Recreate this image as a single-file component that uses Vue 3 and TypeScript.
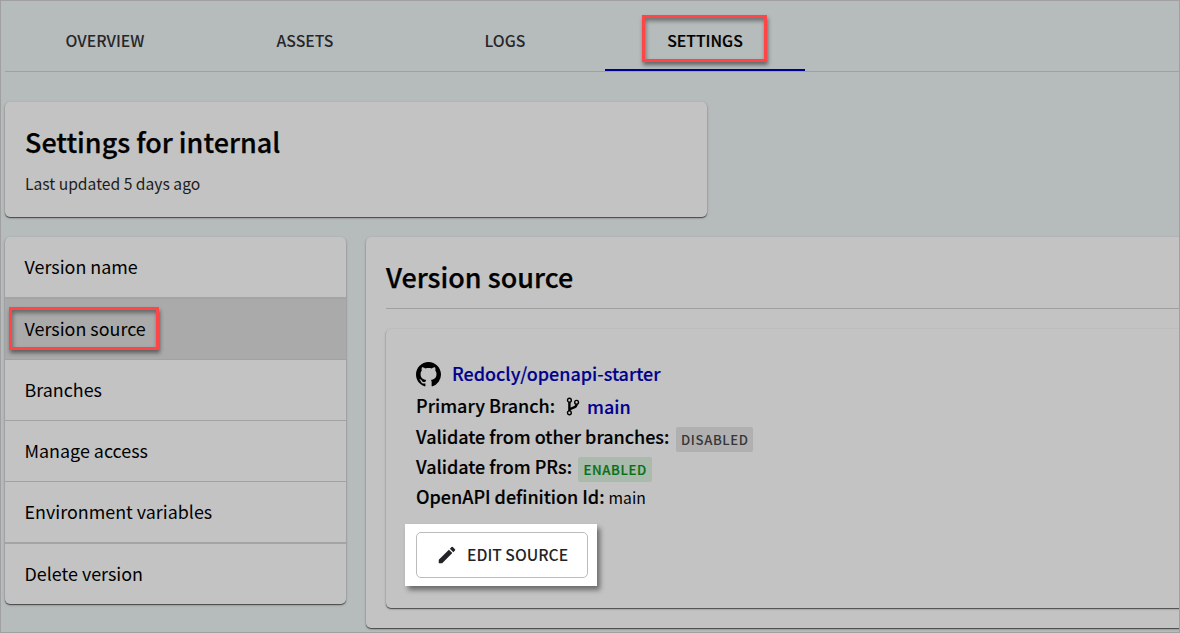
<script setup lang="ts">
import { ref } from 'vue'

interface MenuItem {
  label: string
  divider: string
}

const tabs: string[] = ['OVERVIEW', 'ASSETS', 'LOGS', 'SETTINGS']
const activeTab = ref('SETTINGS')
const items: MenuItem[] = [
  { label: 'Version name', divider: 'thick' },
  { label: 'Version source', divider: 'thin' },
  { label: 'Branches', divider: 'thin' },
  { label: 'Manage access', divider: 'thin' },
  { label: 'Environment variables', divider: 'thick' },
  { label: 'Delete version', divider: 'none' },
]
const activeItem = ref('Version source')
</script>

<template>
  <div class="page">
    <nav class="tabs">
      <div
        v-for="tab in tabs"
        :key="tab"
        class="tab"
        :class="{ active: tab === activeTab }"
        @click="activeTab = tab"
      >
        <span>{{ tab }}</span>
        <i v-if="tab === 'SETTINGS'" class="marker tab-marker"></i>
      </div>
    </nav>

    <header class="card intro">
      <h1>Settings for internal</h1>
      <p>Last updated 5 days ago</p>
    </header>

    <div class="columns">
      <aside class="card menu">
        <div
          v-for="item in items"
          :key="item.label"
          class="item"
          :class="[item.divider, { selected: item.label === activeItem }]"
          @click="activeItem = item.label"
        >
          <span>{{ item.label }}</span>
          <i v-if="item.label === 'Version source'" class="marker item-marker"></i>
        </div>
      </aside>

      <main class="card panel">
        <h2>Version source</h2>
        <section class="card source">
          <div class="row repo">
            <svg class="github" viewBox="0 0 16 16" width="25" height="25">
              <path d="M8 0C3.58 0 0 3.58 0 8c0 3.54 2.29 6.53 5.47 7.59.4.07.55-.17.55-.38 0-.19-.01-.82-.01-1.49-2.01.37-2.53-.49-2.69-.94-.09-.23-.48-.94-.82-1.13-.28-.15-.68-.52-.01-.53.63-.01 1.08.58 1.23.82.72 1.21 1.87.87 2.33.66.07-.52.28-.87.51-1.07-1.78-.2-3.64-.89-3.64-3.95 0-.87.31-1.59.82-2.15-.08-.2-.36-1.02.08-2.12 0 0 .67-.21 2.2.82.64-.18 1.32-.27 2-.27s1.36.09 2 .27c1.53-1.04 2.2-.82 2.2-.82.44 1.1.16 1.92.08 2.12.51.56.82 1.27.82 2.15 0 3.07-1.87 3.75-3.65 3.95.29.25.54.73.54 1.48 0 1.07-.01 1.93-.01 2.2 0 .21.15.46.55.38A8.01 8.01 0 0 0 16 8c0-4.42-3.58-8-8-8z" />
            </svg>
            <a class="link">Redocly/openapi-starter</a>
          </div>
          <div class="row branch">
            <b>Primary Branch:</b>
            <svg class="fork" viewBox="0 0 14 19" width="14" height="19">
              <g fill="none" stroke="#000">
                <circle cx="3.4" cy="3.2" r="1.9" stroke-width="1.4" />
                <circle cx="3.4" cy="15.8" r="1.9" stroke-width="1.4" />
                <circle cx="10.6" cy="5.3" r="1.9" stroke-width="1.4" />
                <path d="M3.4 5v9M10.6 7.2c0 4.8-6.6 2.7-7 6.2" stroke-width="2.4" />
              </g>
            </svg>
            <a class="link branch-link">main</a>
          </div>
          <div class="row">
            <b>Validate from other branches:</b>
            <span class="badge off">DISABLED</span>
          </div>
          <div class="row">
            <b>Validate from PRs:</b>
            <span class="badge on">ENABLED</span>
          </div>
          <div class="row">
            <b>OpenAPI definition Id:</b>
            <span class="value">main</span>
          </div>
          <div class="spotlight">
            <button>
              <svg viewBox="0 0 24 24" width="22" height="22">
                <path d="M3 17.25V21h3.75L17.81 9.94l-3.75-3.75L3 17.25zM20.71 7.04a1 1 0 0 0 0-1.41l-2.34-2.34a1 1 0 0 0-1.41 0l-1.83 1.83 3.75 3.75 1.83-1.83z" />
              </svg>
              <span>EDIT SOURCE</span>
            </button>
          </div>
        </section>
      </main>
    </div>
  </div>
</template>

<style>
body {
  margin: 0;
  overflow: hidden;
}
</style>

<style scoped>
.page {
  box-sizing: border-box;
  width: 1180px;
  height: 633px;
  overflow: hidden;
  padding-left: 4px;
  border: 1px solid #a0a0a1;
  background: #b6bbbc;
  color: #000;
  font-family: 'Noto Sans CJK JP', 'Noto Sans CJK SC', 'Open Sans', sans-serif;
}
.tabs {
  display: flex;
  height: 70px;
  border-bottom: 1px solid #9da0ac;
}
.tab {
  position: relative;
  box-sizing: border-box;
  width: 200px;
  height: 70px;
  padding-top: 6px;
  line-height: 68px;
  text-align: center;
  font-size: 15.8px;
  font-weight: 500;
  color: #252729;
}
.tab.active {
  color: #000;
  border-bottom: 2px solid #00008f;
  -webkit-text-stroke: 0.2px #000;
}
.marker {
  position: absolute;
  box-sizing: border-box;
  border: 3px solid #ff4545;
  box-shadow: 1px 3px 4px rgba(0, 0, 0, 0.45), inset 1px 3px 4px rgba(0, 0, 0, 0.4);
}
.tab-marker {
  left: 37px;
  top: 14px;
  width: 125px;
  height: 47px;
}
.card {
  box-sizing: border-box;
  border-radius: 5px;
  background: #c3c3c3;
  box-shadow: 0 1px 1px rgba(0, 0, 0, 0.55), 0 1px 3px rgba(0, 0, 0, 0.2);
}
.intro {
  width: 702px;
  height: 115px;
  margin-top: 30px;
  padding: 20px 20px 0;
}
h1,
h2 {
  margin: 0;
  font-size: 26.95px;
  line-height: 40px;
  font-weight: 500;
  -webkit-text-stroke: 0.25px #000;
}
p {
  margin: 9px 0 0;
  font-size: 15.65px;
  line-height: 26px;
  color: #1c1c1c;
}
.columns {
  display: flex;
  align-items: flex-start;
  gap: 20px;
  margin-top: 20px;
}
.menu {
  width: 341px;
  flex: none;
}
.item {
  position: relative;
  height: 60px;
  padding-left: 19.5px;
  line-height: 58px;
  font-size: 17.9px;
}
.item.thin {
  border-bottom: 1px solid #a2a2a2;
}
.item.thick {
  border-bottom: 2px solid #a4a4a4;
}
.item.selected {
  background: #aaa;
}
.item-marker {
  left: 4px;
  top: 8px;
  width: 150px;
  height: 43px;
}
.panel {
  width: 840px;
  height: 391px;
  flex: none;
  padding: 20px 0 0 20px;
}
h2 {
  height: 51px;
  border-bottom: 1px solid #a0a0a0;
}
.source {
  width: 840px;
  height: 279px;
  margin-top: 20px;
  padding: 29px 0 0 30px;
}
.row {
  display: flex;
  align-items: center;
  height: 30px;
  font-size: 17.97px;
  line-height: 30px;
}
.repo,
.branch {
  height: 32px;
}
b {
  padding-bottom: 2px;
  font-weight: 500;
  -webkit-text-stroke: 0.15px #000;
}
.link {
  padding-bottom: 2px;
  color: #00008f;
  font-weight: 500;
  -webkit-text-stroke: 0.15px #00008f;
}
.github {
  margin-right: 11px;
}
.fork {
  margin: 0 7px 0 11px;
}
.branch .branch-link {
  padding-bottom: 0;
}
.badge {
  box-sizing: border-box;
  height: 25px;
  margin: 4px 0 0 7px;
  border-radius: 2px;
  text-align: center;
  line-height: 25px;
  font-size: 13.2px;
  font-weight: 500;
  letter-spacing: 0.6px;
}
.off {
  width: 77px;
  background: #b0b0b0;
  color: #353637;
}
.on {
  width: 74px;
  margin-left: 6px;
  background: #aabbad;
  color: #067018;
  -webkit-text-stroke: 0.2px #067018;
}
.value {
  margin-left: 4px;
  padding-top: 2px;
  font-size: 15.7px;
}
.spotlight {
  box-sizing: border-box;
  width: 192px;
  height: 62px;
  margin: 12px 0 0 -11px;
  padding: 8px 9px 8px 11px;
  background: #fff;
  box-shadow: 3px 4px 5px rgba(0, 0, 0, 0.45);
}
button {
  display: flex;
  align-items: center;
  width: 172px;
  height: 46px;
  padding: 0 0 0 19px;
  border: 1px solid #bcbcbc;
  border-radius: 5px;
  background: #fff;
  color: #222427;
  font: inherit;
  font-size: 15.7px;
  font-weight: 500;
}
button span {
  padding-bottom: 2px;
}
button svg {
  margin-right: 9px;
  fill: #222427;
}
</style>
